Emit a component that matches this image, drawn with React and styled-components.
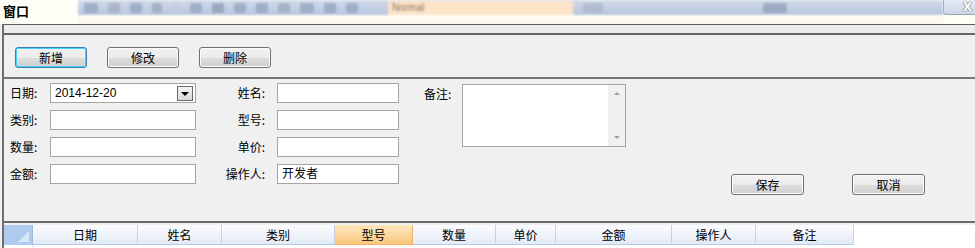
import styled, { createGlobalStyle } from "styled-components";

const GlobalStyle = createGlobalStyle`
  html, body {
    margin: 0;
    padding: 0;
    background: #f0f0f0;
    font-family: "Liberation Sans", "Noto Sans CJK SC", sans-serif;
    font-size: 12px;
    color: #000;
    overflow: hidden;
  }
`;

const Page = styled.div`
  width: 975px;
  height: 248px;
  display: flex;
  flex-direction: column;
  overflow: hidden;
`;

const TitleBar = styled.div`
  height: 24px;
  flex-shrink: 0;
  display: flex;
  background: #fffef6;
`;

const Title = styled.div`
  width: 78px;
  padding: 3px 0 0 3px;
  font-family: "Noto Sans CJK SC", sans-serif;
  font-size: 13px;
  font-weight: 700;
  line-height: 16px;
  box-sizing: border-box;
`;

const ToolbarArea = styled.div`
  flex: 1;
  display: flex;
  flex-direction: column;
`;

const Toolbar = styled.div`
  height: 15px;
  display: flex;
  align-items: center;
  gap: 10px;
  padding: 0 6px;
  background: linear-gradient(#d2dbec, #b8c5dc);
  filter: blur(1.2px);
  overflow: hidden;
`;

const Blob = styled.div`
  width: ${(p) => p.w || 12}px;
  height: 10px;
  border-radius: 2px;
  background: ${(p) => p.c || "#8f9fbd"};
  opacity: 0.7;
`;

const Combo = styled.div`
  width: 185px;
  height: 14px;
  margin-left: 20px;
  background: #fbe4c8;
  color: #8a7460;
  font-size: 10px;
  line-height: 14px;
  padding-left: 4px;
  box-sizing: border-box;
`;

const Spacer = styled.div`
  flex: 1;
`;

const Ruler = styled.div`
  flex: 1;
  background: linear-gradient(#fffef6, #fdf6ea);
`;

const CloseButton = styled.div`
  width: 32px;
  height: 15px;
  box-sizing: border-box;
  border: 1px solid #9aa3b5;
  border-top: none;
  border-right: none;
  border-radius: 0 0 0 3px;
  background: linear-gradient(#e6ebf4, #cdd6e6);
  display: flex;
  align-items: center;
  justify-content: flex-end;
  padding-right: 3px;
  font-family: "DejaVu Sans", sans-serif;
  font-size: 12px;
  font-weight: 700;
  color: #fff;
  text-shadow: 0 0 1px #555, 0 0 1px #555;
`;

const Window = styled.div`
  flex: 1;
  margin-left: 2px;
  border-left: 2px solid #6f6f6f;
  border-top: 1px solid #5e5e5e;
  display: flex;
  flex-direction: column;
  background: #f0f0f0;
`;

const Strip = styled.div`
  height: 8px;
  flex-shrink: 0;
  background: #ececec;
  border-bottom: 2px solid #666;
`;

const ButtonBar = styled.div`
  height: 44px;
  flex-shrink: 0;
  display: flex;
  gap: 20px;
  padding: 12px 0 0 11px;
  box-sizing: border-box;
  border-bottom: 2px solid #777;
`;

const Button = styled.button`
  width: ${(p) => p.w || 72}px;
  height: 21px;
  padding: 0;
  border: 1px solid ${(p) => (p.focus ? "#3c7fb1" : "#707070")};
  border-radius: 3px;
  background: linear-gradient(#f2f2f2 0%, #ebebeb 50%, #dddddd 51%, #cfcfcf 100%);
  box-shadow: ${(p) => (p.focus ? "inset 0 0 0 1px #48d0fc" : "inset 0 0 0 1px #fcfcfc")};
  font-family: "Noto Sans CJK SC", sans-serif;
  font-size: 12px;
  line-height: 18px;
  color: #000;
  align-self: start;
  margin-top: ${(p) => p.offset || 0}px;
`;

const FormArea = styled.div`
  height: 144px;
  flex-shrink: 0;
  box-sizing: border-box;
  padding: 4px 0 0 6px;
  display: grid;
  grid-template-columns: 40px 146px 81px 122px 25px 38px 164px 105px 73px 48px 73px;
  grid-template-rows: repeat(4, 20px);
  row-gap: 7px;
  border-bottom: 2px solid #6b6b6b;
`;

const Label = styled.div`
  grid-column: ${(p) => p.col};
  font-family: "Noto Sans CJK SC", sans-serif;
  font-size: 12px;
  line-height: 20px;
  text-align: ${(p) => (p.right ? "right" : "left")};
  padding-right: ${(p) => (p.right ? 12 : 0)}px;
  align-self: ${(p) => (p.top ? "start" : "center")};
  margin-top: ${(p) => (p.top ? 1 : 0)}px;
`;

const Input = styled.div`
  grid-column: ${(p) => p.col};
  height: 20px;
  box-sizing: border-box;
  border: 1px solid #a5a5a5;
  background: #fff;
  padding-left: 4px;
  font-family: "Liberation Sans", "Noto Sans CJK SC", sans-serif;
  font-size: 12px;
  line-height: 18px;
  display: flex;
  align-items: center;
  justify-content: space-between;
`;

const DropButton = styled.div`
  width: 16px;
  height: 15px;
  margin-right: 2px;
  box-sizing: border-box;
  border: 1px solid #6a6a6a;
  background: linear-gradient(#f6f6f6, #d8d8d8);
  display: flex;
  align-items: center;
  justify-content: center;

  &::after {
    content: "";
    border-left: 4px solid transparent;
    border-right: 4px solid transparent;
    border-top: 4px solid #000;
    margin-top: 1px;
  }
`;

const Memo = styled.div`
  grid-column: 7;
  grid-row: 1 / span 3;
  align-self: start;
  margin-top: 1px;
  height: 63px;
  box-sizing: border-box;
  border: 1px solid #a5a5a5;
  background: #fff;
  display: flex;
  justify-content: flex-end;
`;

const ScrollBar = styled.div`
  width: 17px;
  background: #f0f0f0;
  display: flex;
  flex-direction: column;
  justify-content: space-between;
  align-items: center;
  padding: 7px 0;
`;

const Arrow = styled.div`
  border-left: 3px solid transparent;
  border-right: 3px solid transparent;
  ${(p) => (p.up ? "border-bottom: 3px solid #a0a0a0;" : "border-top: 3px solid #a0a0a0;")}
`;

const GridHeader = styled.div`
  height: 20px;
  flex-shrink: 0;
  margin-top: 2px;
  display: flex;
  background: #fff;
`;

const Corner = styled.div`
  width: 29px;
  height: 20px;
  box-sizing: border-box;
  background: #aecbef;
  border-right: 1px solid #9db9dd;
  display: flex;
  align-items: flex-end;
  justify-content: flex-end;
  padding: 0 3px 3px 0;

  &::after {
    content: "";
    border-left: 11px solid transparent;
    border-bottom: 11px solid #d9e6f6;
  }
`;

const HeadCell = styled.div`
  width: ${(p) => p.w}px;
  height: 20px;
  box-sizing: border-box;
  border-right: 1px solid ${(p) => (p.active ? "#f0b46a" : "#c3d2e6")};
  border-bottom: 1px solid ${(p) => (p.active ? "#f2b25f" : "#b7cbe3")};
  background: ${(p) =>
    p.active
      ? "linear-gradient(#fde6bd, #f9c77f)"
      : "linear-gradient(#fbfcfe, #e3eaf6)"};
  font-family: "Noto Sans CJK SC", sans-serif;
  font-size: 12px;
  line-height: 19px;
  text-align: center;
`;

const columns = [
  { name: "日期", w: 105 },
  { name: "姓名", w: 84 },
  { name: "类别", w: 113 },
  { name: "型号", w: 78, active: true },
  { name: "数量", w: 83 },
  { name: "单价", w: 60 },
  { name: "金额", w: 116 },
  { name: "操作人", w: 84 },
  { name: "备注", w: 98 },
];

const GridBody = styled.div`
  flex: 1;
  background: #fff;
  border-left: 29px solid #fff;
  box-shadow: inset 1px 0 0 #dfe6f0;
`;

export default function App() {
  return (
    <Page>
      <GlobalStyle />
      <TitleBar>
        <Title>窗口</Title>
        <ToolbarArea>
          <Toolbar>
            <Blob w={14} />
            <Blob w={12} c="#a0aac0" />
            <Blob w={12} />
            <Blob w={10} c="#9aa5bf" />
            <Blob w={8} c="#c4ccdc" />
            <Blob w={12} />
            <Blob w={12} c="#8c98b2" />
            <Blob w={12} />
            <Blob w={12} />
            <Blob w={12} c="#9aa5bf" />
            <Blob w={14} />
            <Blob w={12} />
            <Blob w={12} />
            <Combo>Normal</Combo>
            <Blob w={20} c="#aab4ca" />
            <Spacer />
            <Blob w={24} c="#8f9bb6" />
            <Spacer />
          </Toolbar>
          <Ruler />
        </ToolbarArea>
        <CloseButton>X</CloseButton>
      </TitleBar>
      <Window>
        <Strip />
        <ButtonBar>
          <Button focus>新增</Button>
          <Button>修改</Button>
          <Button>删除</Button>
        </ButtonBar>
        <FormArea>
          <Label col={1} style={{ gridRow: 1 }}>日期:</Label>
          <Input col={2} style={{ gridRow: 1 }}>
            2014-12-20
            <DropButton />
          </Input>
          <Label col={1} style={{ gridRow: 2 }}>类别:</Label>
          <Input col={2} style={{ gridRow: 2 }} />
          <Label col={1} style={{ gridRow: 3 }}>数量:</Label>
          <Input col={2} style={{ gridRow: 3 }} />
          <Label col={1} style={{ gridRow: 4 }}>金额:</Label>
          <Input col={2} style={{ gridRow: 4 }} />

          <Label col={3} right style={{ gridRow: 1 }}>姓名:</Label>
          <Input col={4} style={{ gridRow: 1 }} />
          <Label col={3} right style={{ gridRow: 2 }}>型号:</Label>
          <Input col={4} style={{ gridRow: 2 }} />
          <Label col={3} right style={{ gridRow: 3 }}>单价:</Label>
          <Input col={4} style={{ gridRow: 3 }} />
          <Label col={3} right style={{ gridRow: 4 }}>操作人:</Label>
          <Input col={4} style={{ gridRow: 4 }}>开发者</Input>

          <Label col={6} top style={{ gridRow: 1 }}>备注:</Label>
          <Memo>
            <ScrollBar>
              <Arrow up />
              <Arrow />
            </ScrollBar>
          </Memo>

          <Button w={73} offset={10} style={{ gridColumn: 9, gridRow: 4 }}>保存</Button>
          <Button w={73} offset={10} style={{ gridColumn: 11, gridRow: 4 }}>取消</Button>
        </FormArea>
        <GridHeader>
          <Corner />
          {columns.map((c) => (
            <HeadCell key={c.name} w={c.w} active={c.active}>
              {c.name}
            </HeadCell>
          ))}
        </GridHeader>
        <GridBody />
      </Window>
    </Page>
  );
}
